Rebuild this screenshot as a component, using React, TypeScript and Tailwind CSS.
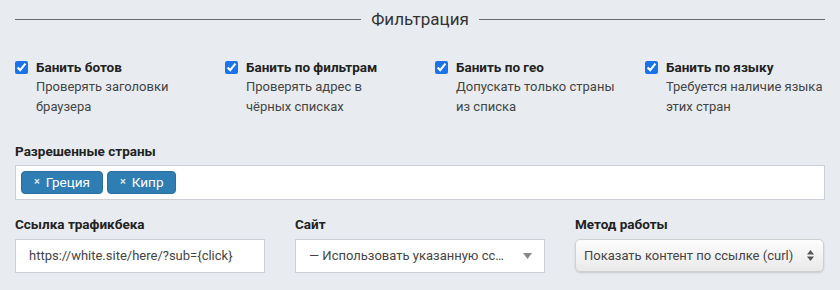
import React from "react";

const filters = [
  { title: "Банить ботов", text: "Проверять заголовки браузера" },
  { title: "Банить по фильтрам", text: "Проверять адрес в чёрных списках" },
  { title: "Банить по гео", text: "Допускать только страны из списка" },
  { title: "Банить по языку", text: "Требуется наличие языка этих стран" },
];

const countries = ["Греция", "Кипр"];

export default function App() {
  return (
    <div
      className="w-[840px] h-[290px] bg-[#e8ecf0] text-[#333] px-[15px] overflow-hidden"
      style={{ fontFamily: "Roboto, 'Noto Sans', sans-serif" }}
    >
      {/* legend */}
      <div className="flex items-center h-[38px] gap-[10px]">
        <div className="flex-1 h-px bg-[#6b6b6b]" />
        <span className="text-[17px] text-[#333] leading-none">Фильтрация</span>
        <div className="flex-1 h-px bg-[#6b6b6b]" />
      </div>

      {/* checkboxes */}
      <div className="grid grid-cols-4 mt-[19px] -mx-[15px]">
        {filters.map((f) => (
          <label key={f.title} className="flex px-[15px] gap-[8px]">
            <input
              type="checkbox"
              defaultChecked
              className="mt-[4px] w-[13px] h-[13px] shrink-0 accent-[#1a73e8]"
            />
            <div className="leading-[20px]">
              <div className="text-[13.5px] font-bold text-[#222]">{f.title}</div>
              <div className="text-[13px] text-[#444]">{f.text}</div>
            </div>
          </label>
        ))}
      </div>

      {/* countries */}
      <div className="mt-[24px]">
        <div className="text-[13.5px] font-bold text-[#222] leading-[20px] mb-[4px]">Разрешенные страны</div>
        <div className="h-[35px] bg-white border border-[#cbd0d8] flex items-center gap-[4px] px-[5px]">
          {countries.map((c) => (
            <span
              key={c}
              className="h-[23px] flex items-center gap-[6px] px-[12px] rounded-[4px] bg-[#2e7db3] border border-[#2a6f9f] text-white text-[13.5px]"
            >
              <span className="text-[11px] font-bold text-[#d6e6f2]">×</span>
              {c}
            </span>
          ))}
        </div>
      </div>

      {/* bottom row */}
      <div className="grid grid-cols-3 -mx-[15px] mt-[14px]">
        <div className="px-[15px]">
          <div className="text-[13.5px] font-bold text-[#222] leading-[20px] mb-[5px]">Ссылка трафикбека</div>
          <div className="w-[250px] h-[34px] bg-white border border-[#cbd0d8] flex items-center px-[13px] text-[13px] text-[#444]">
            https://white.site/here/?sub={"{click}"}
          </div>
        </div>
        <div className="px-[15px]">
          <div className="text-[13.5px] font-bold text-[#222] leading-[20px] mb-[5px]">Сайт</div>
          <div className="w-[250px] h-[34px] bg-white border border-[#cbd0d8] flex items-center pl-[13px] pr-[12px] text-[13px] text-[#444]">
            <span className="flex-1 truncate">— Использовать указанную ссылку —</span>
            <svg width="9" height="6" viewBox="0 0 9 6" className="ml-[12px] shrink-0">
              <path d="M0 0h9L4.5 6z" fill="#888" />
            </svg>
          </div>
        </div>
        <div className="px-[15px]">
          <div className="text-[13.5px] font-bold text-[#222] leading-[20px] mb-[5px]">Метод работы</div>
          <div className="w-[249px] h-[33px] rounded-[5px] border border-[#d0d0d0] bg-gradient-to-b from-[#fdfdfd] to-[#e9e9e9] shadow-[0_1px_2px_rgba(0,0,0,0.15)] flex items-center pl-[8px] pr-[9px] text-[13px] text-[#444]">
            <span className="flex-1 whitespace-nowrap">Показать контент по ссылке (curl)</span>
            <svg width="7" height="11" viewBox="0 0 7 11" className="shrink-0">
              <path d="M0 4.5L3.5 0 7 4.5z" fill="#555" />
              <path d="M0 6.5L3.5 11 7 6.5z" fill="#555" />
            </svg>
          </div>
        </div>
      </div>
    </div>
  );
}
